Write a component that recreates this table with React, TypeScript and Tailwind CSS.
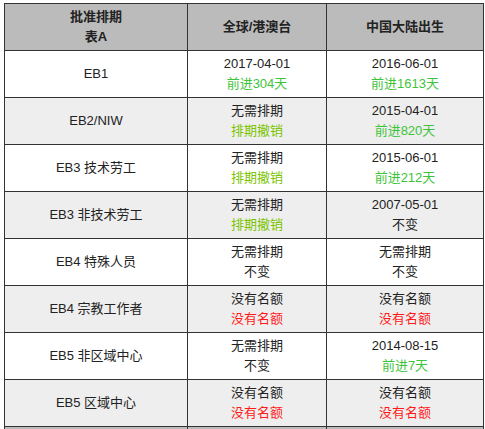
const rows: Array<{
  name: string;
  a: [string, string, string];
  b: [string, string, string];
}> = [
  { name: 'EB1', a: ['2017-04-01', '前进304天', 'g'], b: ['2016-06-01', '前进1613天', 'g'] },
  { name: 'EB2/NIW', a: ['无需排期', '排期撤销', 'y'], b: ['2015-04-01', '前进820天', 'g'] },
  { name: 'EB3 技术劳工', a: ['无需排期', '排期撤销', 'y'], b: ['2015-06-01', '前进212天', 'g'] },
  { name: 'EB3 非技术劳工', a: ['无需排期', '排期撤销', 'y'], b: ['2007-05-01', '不变', 'n'] },
  { name: 'EB4 特殊人员', a: ['无需排期', '不变', 'n'], b: ['无需排期', '不变', 'n'] },
  { name: 'EB4 宗教工作者', a: ['没有名额', '没有名额', 'r'], b: ['没有名额', '没有名额', 'r'] },
  { name: 'EB5 非区域中心', a: ['无需排期', '不变', 'n'], b: ['2014-08-15', '前进7天', 'g'] },
  { name: 'EB5 区域中心', a: ['没有名额', '没有名额', 'r'], b: ['没有名额', '没有名额', 'r'] },
];

const tone: Record<string, string> = {
  g: 'text-[#3ec43a]',
  y: 'text-[#7cc400]',
  r: 'text-[#ff1a1a]',
  n: 'text-[#222]',
};

function Cell({ v }: { v: [string, string, string] }) {
  return (
    <td className="border border-[#333] text-center align-middle">
      <div>{v[0]}</div>
      <div className={tone[v[2]]}>{v[1]}</div>
    </td>
  );
}

export default function App() {
  return (
    <div className="w-[485px] h-[429px] overflow-hidden bg-white pl-[4px] pt-[3px] font-['Liberation_Sans','Noto_Sans_CJK_SC',sans-serif] text-[13px] leading-[20px] text-[#222]">
      <table className="w-[479px] border-collapse border border-[#333] table-fixed">
        <colgroup>
          <col className="w-[183px]" />
          <col className="w-[139px]" />
          <col className="w-[157px]" />
        </colgroup>
        <thead>
          <tr className="h-[47px] bg-[#bbbbbb] font-bold">
            <th className="border border-[#333] text-center">
              <div>批准排期</div>
              <div>表A</div>
            </th>
            <th className="border border-[#333] text-center">全球/港澳台</th>
            <th className="border border-[#333] text-center">中国大陆出生</th>
          </tr>
        </thead>
        <tbody>
          {rows.map((r, i) => (
            <tr key={r.name} className={`h-[47px] ${i % 2 === 1 ? 'bg-[#eeeeee]' : 'bg-white'}`}>
              <td className="border border-[#333] text-center align-middle">{r.name}</td>
              <Cell v={r.a} />
              <Cell v={r.b} />
            </tr>
          ))}
          <tr className="h-[47px] bg-[#bbbbbb]">
            <td className="border border-[#333]" />
            <td className="border border-[#333]" />
            <td className="border border-[#333]" />
          </tr>
        </tbody>
      </table>
    </div>
  );
}
